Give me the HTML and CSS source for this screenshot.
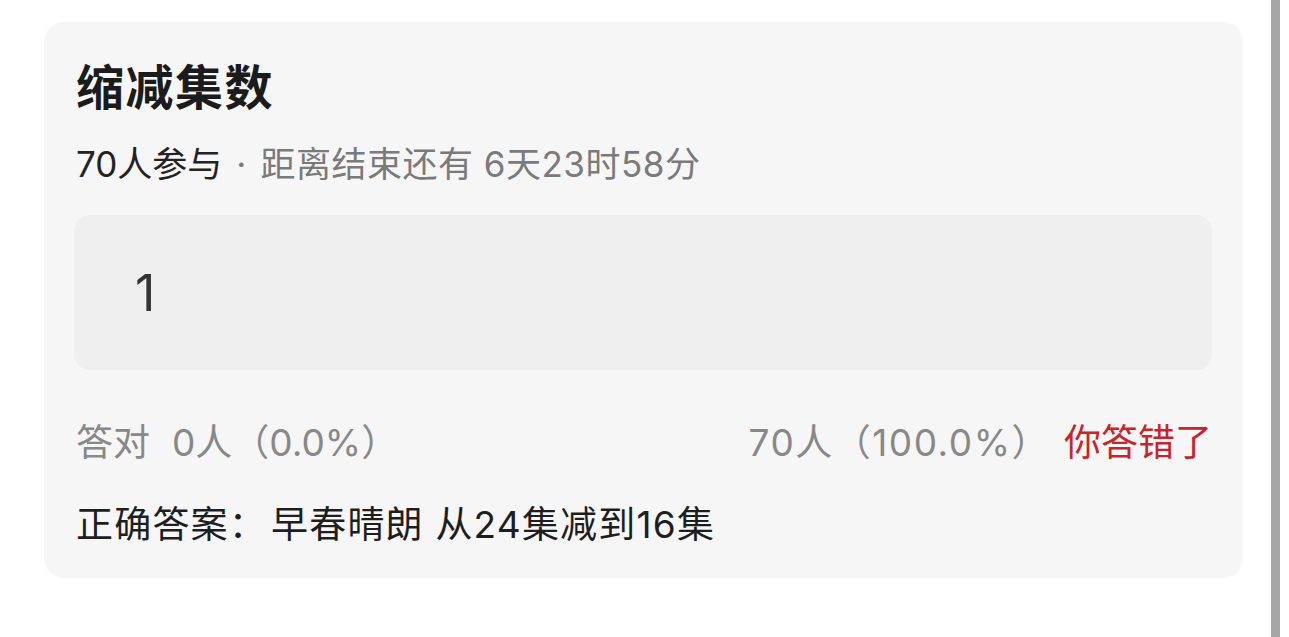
FILE: index.html
```html
<!DOCTYPE html>
<html lang="zh-CN">
<head>
<meta charset="utf-8">
<link rel="stylesheet" href="styles.css">
</head>
<body>
<div class="page">
  <main class="content">
    <section class="card">
      <h1 class="title">缩减集数</h1>
      <p class="meta"><span class="count">70人参与</span><span class="dot">·</span><span class="remain">距离结束还有 6天23时58分</span></p>
      <div class="answer-box"><span class="answer">1</span></div>
      <div class="stats">
        <span class="stat"><span class="stat-label">答对</span>0人（0.0%）</span>
        <span class="stat-right"><span class="stat stat-total">70人（100.0%）</span><span class="wrong">你答错了</span></span>
      </div>
      <p class="correct"><span class="correct-label">正确答案：</span>早春晴朗 从24集减到16集</p>
    </section>
  </main>
  <div class="scrollbar"></div>
</div>
</body>
</html>
```
FILE: styles.css
```css
html, body {
  margin: 0;
  padding: 0;
  background: #ffffff;
}
body {
  font-family: "Inter", "Noto Sans CJK SC", sans-serif;
  width: 1289px;
  height: 637px;
  overflow: hidden;
}
.page {
  display: flex;
  height: 637px;
}
.content {
  width: 1271px;
  padding: 22px 0 0 44px;
  box-sizing: border-box;
}
.card {
  width: 1199px;
  height: 556px;
  box-sizing: border-box;
  background: #f6f6f6;
  border-radius: 20px;
  padding: 32px 31px 0 32px;
}
.title {
  margin: 0;
  font-family: "Noto Sans CJK SC", sans-serif;
  font-size: 48px;
  font-weight: 700;
  line-height: 60px;
  color: #1b1b1b;
  letter-spacing: 1.5px;
}
.meta {
  margin: 28px 0 0;
  font-size: 35px;
  line-height: 44px;
  color: #7a7a7a;
}
.count {
  color: #222;
}
.dot {
  margin: 0 14px;
}
.remain {
  letter-spacing: 0.5px;
}
.answer-box {
  margin-top: 29px;
  margin-left: -2px;
  height: 155px;
  background: #efefef;
  border-radius: 16px;
  display: flex;
  align-items: center;
  padding-left: 61px;
}
.answer {
  font-size: 50px;
  color: #333;
  line-height: 1;
}
.stats {
  margin-top: 49px;
  display: flex;
  justify-content: space-between;
  font-size: 37px;
  line-height: 48px;
  color: #888;
}
.stat-label {
  margin-right: 22px;
}
.stat-total {
  letter-spacing: 1.5px;
}
.stat-right {
  display: flex;
  gap: 14px;
}
.wrong {
  color: #c8252b;
}
.correct {
  margin: 34px 0 0;
  font-size: 37px;
  line-height: 48px;
  color: #1e1e1e;
  letter-spacing: 1.2px;
}
.correct-label {
  margin-right: 4px;
}
.scrollbar {
  width: 9px;
  height: 637px;
  background: #a6a6a6;
}
```
